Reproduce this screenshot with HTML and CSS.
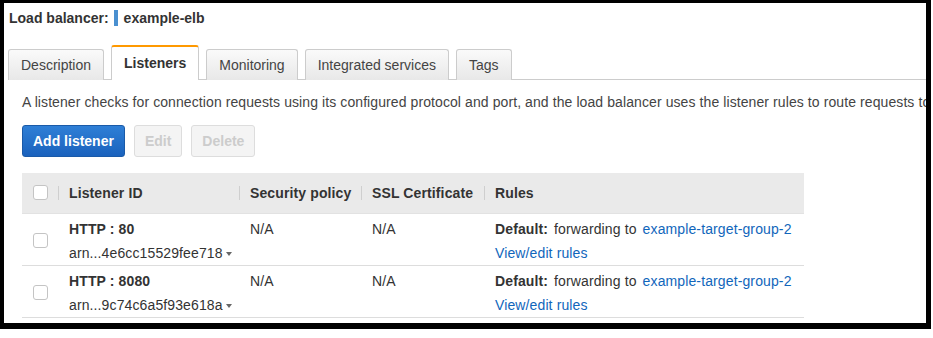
FILE: index.html
```
<!DOCTYPE html>
<html>
<head>
<meta charset="utf-8">
<link rel="stylesheet" href="styles.css">
</head>
<body>
<div class="frame">
  <div class="lb-header">
    <span class="lb-label">Load balancer:</span>
    <span class="lb-bar"></span>
    <span class="lb-name">example-elb</span>
  </div>
  <div class="tabs">
    <div class="tab">Description</div>
    <div class="tab active">Listeners</div>
    <div class="tab">Monitoring</div>
    <div class="tab">Integrated services</div>
    <div class="tab">Tags</div>
  </div>
  <div class="content">
    <p class="desc">A listener checks for connection requests using its configured protocol and port, and the load balancer uses the listener rules to route requests to one or more targets.</p>
    <div class="actions">
      <button class="btn primary">Add listener</button>
      <button class="btn disabled">Edit</button>
      <button class="btn disabled">Delete</button>
    </div>
    <table class="grid">
      <colgroup>
        <col class="c-check"><col class="c-id"><col class="c-sec"><col class="c-ssl"><col class="c-rules">
      </colgroup>
      <thead>
        <tr>
          <th class="check-cell"><span class="cbox"></span></th>
          <th class="sep">Listener ID</th>
          <th class="sep">Security policy</th>
          <th class="sep">SSL Certificate</th>
          <th class="sep">Rules</th>
        </tr>
      </thead>
      <tbody>
        <tr>
          <td class="check-cell"><span class="cbox"></span></td>
          <td><div class="strong">HTTP : 80</div><div>arn...4e6cc15529fee718<span class="caret"></span></div></td>
          <td>N/A</td>
          <td>N/A</td>
          <td><div><span class="strong">Default:</span> <span class="fwd">forwarding to</span> <a class="link">example-target-group-2</a></div><div><a class="link">View/edit rules</a></div></td>
        </tr>
        <tr>
          <td class="check-cell"><span class="cbox"></span></td>
          <td><div class="strong">HTTP : 8080</div><div>arn...9c74c6a5f93e618a<span class="caret"></span></div></td>
          <td>N/A</td>
          <td>N/A</td>
          <td><div><span class="strong">Default:</span> <span class="fwd">forwarding to</span> <a class="link">example-target-group-2</a></div><div><a class="link">View/edit rules</a></div></td>
        </tr>
      </tbody>
    </table>
  </div>
</div>
</body>
</html>
```
FILE: styles.css
```
* { box-sizing: border-box; }
html, body { margin: 0; padding: 0; background: #fff; }
body {
  font-family: "Liberation Sans", Arial, Helvetica, sans-serif;
  font-size: 14px;
  color: #444;
}
.frame {
  width: 931px;
  height: 329px;
  border-style: solid;
  border-color: #000;
  border-width: 3px 5px 6px 4px;
  overflow: hidden;
}
.lb-header {
  display: flex;
  align-items: center;
  padding: 5px 5px 0;
  height: 25px;
  line-height: 20px;
  font-weight: bold;
  color: #333;
}
.lb-bar {
  display: inline-block;
  width: 4px;
  height: 16px;
  background: #4a90d0;
  margin: 0 6px 0 5px;
}
.tabs {
  display: flex;
  align-items: flex-end;
  gap: 7px;
  margin-top: 18px;
  margin-left: 4px;
  height: 34px;
  border-bottom: 1px solid #cccccc;
}
.tab {
  height: 31px;
  margin-bottom: -1px;
  padding: 0 12px;
  line-height: 30px;
  color: #444;
  border: 1px solid #cccccc;
  border-bottom: none;
  border-radius: 3px 3px 0 0;
  background: linear-gradient(#fafafa, #e8e8e8);
  white-space: nowrap;
}
.tab.active {
  height: 35px;
  line-height: 32px;
  background: #fff;
  font-weight: bold;
  color: #333;
  border-top: 2px solid #f90;
}
.content {
  padding-left: 18px;
}
.desc {
  margin: 12px 0 0;
  line-height: 20px;
  white-space: nowrap;
  color: #444;
  letter-spacing: 0.09px;
}
.actions {
  display: flex;
  gap: 9px;
  margin-top: 13px;
}
.btn {
  height: 32px;
  padding: 0 10px;
  font-family: inherit;
  font-size: 14px;
  font-weight: bold;
  border-radius: 3px;
  border: 1px solid;
}
.btn.primary {
  color: #fff;
  background: linear-gradient(#2f7fd6, #1a62bd);
  border-color: #1a5aa8;
}
.btn.disabled {
  color: #cccccc;
  background: #f4f4f4;
  border-color: #dddddd;
}
.grid {
  margin-top: 16px;
  width: 782px;
  border-collapse: collapse;
  table-layout: fixed;
  color: #333;
  letter-spacing: 0.12px;
}
.c-check { width: 36px; }
.c-id { width: 181px; }
.c-sec { width: 122px; }
.c-ssl { width: 123px; }
.c-rules { width: 320px; }
.grid thead tr {
  height: 40px;
  background: #eaeaea;
  border-bottom: 1px solid #e2e2e2;
}
.grid th {
  text-align: left;
  font-weight: bold;
  padding: 0 10px 0 11px;
  white-space: nowrap;
  color: #333;
}
.grid th.sep {
  background: linear-gradient(#cfcfcf, #cfcfcf) left center / 1px 14px no-repeat;
}
.grid tbody tr {
  border-bottom: 1px solid #dddddd;
}
.grid td {
  vertical-align: top;
  padding: 3px 10px 0 11px;
  line-height: 24px;
  white-space: nowrap;
}
.grid .check-cell {
  vertical-align: middle;
  padding: 0 0 0 11px;
}
.grid td.check-cell { padding-top: 2px; }
.cbox {
  display: block;
  width: 15px;
  height: 15px;
  border: 1px solid #c4c4c4;
  border-radius: 3px;
  background: #fff;
}
.strong { font-weight: bold; }
.fwd { margin-left: 2px; margin-right: 2px; }
.link { color: #1166bb; text-decoration: none; }
.caret {
  display: inline-block;
  margin-left: 3px;
  vertical-align: middle;
  width: 0;
  height: 0;
  border-left: 3.5px solid transparent;
  border-right: 3.5px solid transparent;
  border-top: 4px solid #666;
}
```
